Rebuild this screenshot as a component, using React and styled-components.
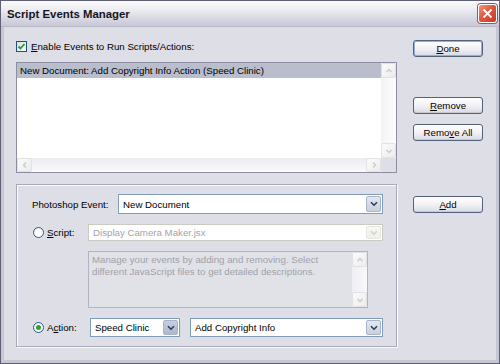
import React from 'react';
import styled, { createGlobalStyle } from 'styled-components';

const Global = createGlobalStyle`
  html, body { margin: 0; padding: 0; background: #fff; }
  body { font-family: "Liberation Sans", Arial, sans-serif; font-size: 9.7px; color: #000; }
  * { box-sizing: border-box; }
`;

const FS = '9.7px';

const Window = styled.div`
  width: 500px;
  height: 364px;
  border: 1px solid #5f6075;
  display: flex;
  flex-direction: column;
  background: #dedee6;
  overflow: hidden;
`;

const TitleBar = styled.div`
  height: 26px;
  flex: none;
  display: flex;
  align-items: center;
  justify-content: space-between;
  padding: 0 2px 0 6px;
  background: linear-gradient(#fbfbfd 0%, #ececf2 35%, #d6d6e2 75%, #c7c7d6 100%);
  border-bottom: 1px solid #b9b9c9;
`;

const Title = styled.span`
  font: bold 11.4px "Liberation Sans", Arial, sans-serif;
  color: #151520;
`;

const CloseBtn = styled.div`
  width: 19px;
  height: 19px;
  border-radius: 3px;
  border: 1px solid #fff;
  box-shadow: 0 0 0 1px #b05040;
  background: linear-gradient(135deg, #f19a80 0%, #de5a3f 45%, #c33a26 100%);
  display: flex;
  align-items: center;
  justify-content: center;
`;

const Body = styled.div`
  flex: 1;
  display: flex;
  border: 3px solid #c7c7d4;
  border-top: none;
  padding: 13px 13px 12px 12px;
  gap: 16px;
`;

const LeftCol = styled.div`
  width: 381px;
  display: flex;
  flex-direction: column;
`;

const RightCol = styled.div`
  width: 70px;
  display: flex;
  flex-direction: column;
`;

const CheckRow = styled.label`
  height: 12px;
  display: flex;
  align-items: center;
  gap: 4px;
  margin-bottom: 10px;
  font-size: ${FS};
`;

const CheckBox = styled.span`
  width: 11px;
  height: 11px;
  border: 1px solid #1d5281;
  background: linear-gradient(135deg, #dcdcd7, #fff);
  display: flex;
  align-items: center;
  justify-content: center;
`;

const ListBox = styled.div`
  height: 111px;
  border: 1px solid #8e8ea2;
  background: #fff;
  display: grid;
  grid-template-columns: 1fr 15px;
  grid-template-rows: 1fr 14px;
`;

const ListArea = styled.div`
  overflow: hidden;
`;

const ListRow = styled.div`
  height: 15px;
  line-height: 15px;
  padding-left: 3px;
  font-size: ${FS};
  background: ${p => (p.$selected ? '#b9bdcc' : 'transparent')};
  white-space: nowrap;
`;

const VScroll = styled.div`
  display: flex;
  flex-direction: column;
  justify-content: space-between;
  background: linear-gradient(90deg, #f3f3f6, #fdfdfe);
`;

const HScroll = styled.div`
  display: flex;
  justify-content: space-between;
  background: linear-gradient(#ececf1, #fafafc);
`;

const Corner = styled.div`
  background: #dedee6;
`;

const ScrollBtn = styled.div`
  width: ${p => p.$w || 15}px;
  height: ${p => p.$h || 15}px;
  border: 1px solid #e2e2e6;
  border-radius: 2px;
  background: linear-gradient(135deg, #fbfbfb, #ececec);
  display: flex;
  align-items: center;
  justify-content: center;
`;

const GroupBox = styled.div`
  height: 163px;
  margin-top: 11px;
  border: 1px solid #a9a9b9;
  box-shadow: inset 1px 1px 0 #fafafc, 1px 1px 0 #fafafc;
  padding: 9px 13px 0 15px;
  display: flex;
  flex-direction: column;
`;

const FieldRow = styled.div`
  display: flex;
  align-items: center;
  height: ${p => p.$h}px;
  margin-top: ${p => p.$mt || 0}px;
  gap: ${p => p.$gap || 0}px;
`;

const FieldLabel = styled.div`
  width: ${p => p.$w}px;
  flex: none;
  display: flex;
  align-items: center;
  gap: 3px;
  font-size: ${FS};
`;

const Radio = styled.span`
  width: 11px;
  height: 11px;
  border-radius: 50%;
  border: 1px solid #2a5d88;
  background: radial-gradient(circle at 60% 60%, #fff 40%, #dfe6ee 100%);
  display: flex;
  align-items: center;
  justify-content: center;
  margin-left: 1px;
  &::after {
    content: '';
    width: 5px;
    height: 5px;
    border-radius: 50%;
    background: ${p => (p.$checked ? '#2ca232' : 'transparent')};
  }
`;

const Select = styled.div`
  flex: ${p => (p.$w ? 'none' : 1)};
  width: ${p => (p.$w ? `${p.$w}px` : 'auto')};
  height: 100%;
  border: 1px solid ${p => (p.$disabled ? '#cbcbc2' : '#7f9cb8')};
  background: #fff;
  display: flex;
  align-items: center;
  padding: 1px;
  font-size: ${FS};
  color: ${p => (p.$disabled ? '#a4a4a8' : '#000')};
`;

const SelectText = styled.span`
  flex: 1;
  padding-left: 3px;
  white-space: nowrap;
  overflow: hidden;
`;

const DropBtn = styled.span`
  width: 15px;
  height: 100%;
  border: 1px solid ${p => (p.$disabled ? '#e6e6e0' : '#a7b3c9')};
  border-radius: 2px;
  background: ${p =>
    p.$disabled
      ? 'linear-gradient(#f8f8f6, #efefeb)'
      : p.$dark
      ? 'linear-gradient(#c6cede, #aeb8cc)'
      : 'linear-gradient(#e3e7f0, #c9d0de)'};
  display: flex;
  align-items: center;
  justify-content: center;
`;

const TextArea = styled.div`
  margin: 10px 15px 0 56px;
  height: 57px;
  border: 1px solid #b3b3c1;
  background: #e1e1e8;
  display: flex;
`;

const TextAreaText = styled.div`
  flex: 1;
  padding: 2px 3px;
  font-size: ${FS};
  line-height: 12px;
  color: #a2a2aa;
`;

const TAScroll = styled.div`
  width: 15px;
  display: flex;
  flex-direction: column;
  justify-content: space-between;
  background: linear-gradient(90deg, #eeeef4, #f8f8fb);
`;

const Button = styled.div`
  height: 17px;
  margin-top: ${p => p.$mt || 0}px;
  border: 1px solid #53607e;
  border-radius: 3px;
  background: linear-gradient(#ffffff 0%, #f2f2f6 50%, #d9d9e4 100%);
  box-shadow: ${p => (p.$default ? 'inset 0 0 0 1px #8fb0dc' : 'inset 0 -1px 0 #c9c9d6')};
  display: flex;
  align-items: center;
  justify-content: center;
  font-size: ${FS};
  color: #000;
`;

const Chevron = ({ color = '#3c4c6c', w = 1.6 }) => (
  <svg width="8" height="6" viewBox="0 0 8 6">
    <path d="M1 1.2 L4 4.2 L7 1.2" fill="none" stroke={color} strokeWidth={w} />
  </svg>
);

const Arrow = ({ dir }) => {
  const d = {
    up: 'M1.5 5 L4 2.5 L6.5 5',
    down: 'M1.5 3 L4 5.5 L6.5 3',
    left: 'M5 1.5 L2.5 4 L5 6.5',
    right: 'M3 1.5 L5.5 4 L3 6.5',
  }[dir];
  return (
    <svg width="8" height="8" viewBox="0 0 8 8">
      <path d={d} fill="none" stroke="#c9c9cf" strokeWidth="1.3" />
    </svg>
  );
};

const DropSelect = ({ text, disabled, dark, w }) => (
  <Select $disabled={disabled} $w={w}>
    <SelectText>{text}</SelectText>
    <DropBtn $disabled={disabled} $dark={dark}>
      <Chevron color={disabled ? '#d2d2d0' : '#2f3d5c'} />
    </DropBtn>
  </Select>
);

export default function App() {
  return (
    <>
      <Global />
      <Window>
        <TitleBar>
          <Title>Script Events Manager</Title>
          <CloseBtn>
            <svg width="11" height="11" viewBox="0 0 11 11">
              <path d="M1.5 1.5 L9.5 9.5 M9.5 1.5 L1.5 9.5" stroke="#fff" strokeWidth="1.8" />
            </svg>
          </CloseBtn>
        </TitleBar>
        <Body>
          <LeftCol>
            <CheckRow>
              <CheckBox>
                <svg width="9" height="9" viewBox="0 0 9 9">
                  <path d="M1.5 4.5 L3.5 6.5 L7.5 2" fill="none" stroke="#21a121" strokeWidth="1.8" />
                </svg>
              </CheckBox>
              <span><u>E</u>nable Events to Run Scripts/Actions:</span>
            </CheckRow>
            <ListBox>
              <ListArea>
                <ListRow $selected>New Document: Add Copyright Info Action (Speed Clinic)</ListRow>
              </ListArea>
              <VScroll>
                <ScrollBtn><Arrow dir="up" /></ScrollBtn>
                <ScrollBtn><Arrow dir="down" /></ScrollBtn>
              </VScroll>
              <HScroll>
                <ScrollBtn $h={14}><Arrow dir="left" /></ScrollBtn>
                <ScrollBtn $h={14}><Arrow dir="right" /></ScrollBtn>
              </HScroll>
              <Corner />
            </ListBox>
            <GroupBox>
              <FieldRow $h={20}>
                <FieldLabel $w={86}>Photoshop Event:</FieldLabel>
                <DropSelect text="New Document" />
              </FieldRow>
              <FieldRow $h={17} $mt={10}>
                <FieldLabel $w={56}>
                  <Radio />
                  <span><u>S</u>cript:</span>
                </FieldLabel>
                <DropSelect text="Display Camera Maker.jsx" disabled />
              </FieldRow>
              <TextArea>
                <TextAreaText>
                  Manage your events by adding and removing. Select<br />
                  different JavaScript files to get detailed descriptions.
                </TextAreaText>
                <TAScroll>
                  <ScrollBtn><Arrow dir="up" /></ScrollBtn>
                  <ScrollBtn><Arrow dir="down" /></ScrollBtn>
                </TAScroll>
              </TextArea>
              <FieldRow $h={19} $mt={10} $gap={10}>
                <FieldLabel $w={48}>
                  <Radio $checked />
                  <span>A<u>c</u>tion:</span>
                </FieldLabel>
                <DropSelect text="Speed Clinic" w={90} dark />
                <DropSelect text="Add Copyright Info" />
              </FieldRow>
            </GroupBox>
          </LeftCol>
          <RightCol>
            <Button $default><span><u>D</u>one</span></Button>
            <Button $mt={40}><span><u>R</u>emove</span></Button>
            <Button $mt={10}><span>Remo<u>v</u>e All</span></Button>
            <Button $mt={55}><span><u>A</u>dd</span></Button>
          </RightCol>
        </Body>
      </Window>
    </>
  );
}
